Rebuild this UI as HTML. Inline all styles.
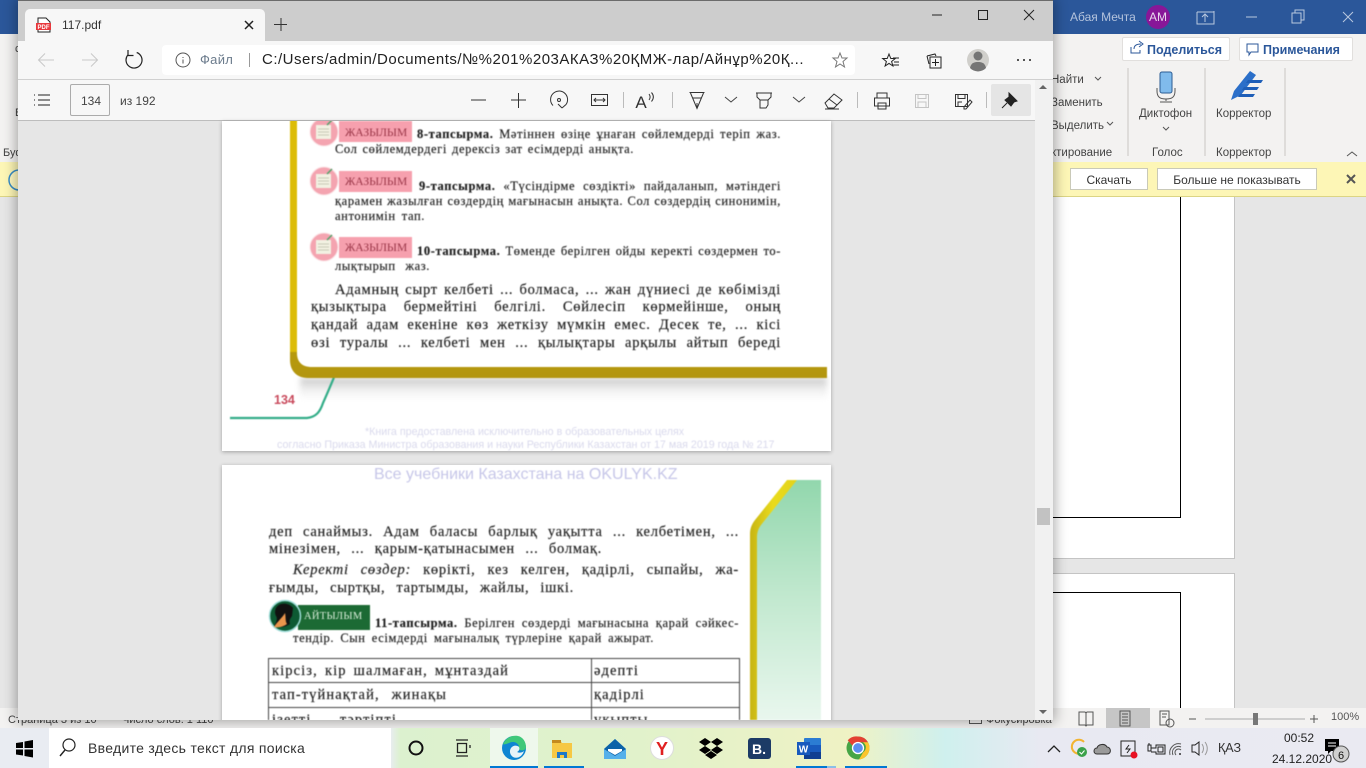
<!DOCTYPE html>
<html lang="ru"><head><meta charset="utf-8"><title>117.pdf</title>
<style>
html,body{margin:0;padding:0;width:1366px;height:768px;overflow:hidden;background:#e6e6e6}
body{position:relative;font-family:"Liberation Sans","DejaVu Sans",sans-serif;color:#333}
.a{position:absolute}
.t{position:absolute;white-space:nowrap;line-height:0}
svg{position:absolute;left:0;top:0;overflow:visible}
#win{position:absolute;left:0;top:0;width:1366px;height:768px;clip-path:inset(0 313px 48px 18px)}
.pg{position:absolute;background:#fff}
.j{position:absolute;line-height:0;text-align:justify;text-align-last:justify;font-family:"Liberation Serif","DejaVu Serif",serif;color:#1c1c1c;-webkit-text-stroke:.15px #1c1c1c}
.s{font-size:12.5px;letter-spacing:.6px}.m{font-size:14.5px;letter-spacing:.75px;color:#1a1a1a}
.c{letter-spacing:1.1px}
.btn{position:absolute;background:#fff;border:1px solid #c9c9b8;box-sizing:border-box;text-align:center;font-size:12px;color:#333}
</style></head><body>

<!-- WORD behind -->
<div class="a" style="left:0;top:0;width:1366px;height:34px;background:#2b579a"></div>
<div class="a" style="left:0;top:34px;width:1366px;height:128px;background:#f3f2f1"></div>
<div class="a" style="left:0;top:162px;width:1366px;height:35px;background:#fdf6b6;border-bottom:1px solid #dcd584;box-sizing:border-box"></div>
<div class="a" style="left:1053px;top:197px;width:181px;height:361px;background:#fff;border:solid #c4c4c4;border-width:0 1px 1px 0"></div>
<div class="a" style="left:1053px;top:573px;width:181px;height:135px;background:#fff;border:solid #c4c4c4;border-width:1px 1px 0 0"></div>
<div class="a" style="left:1053px;top:197px;width:128px;height:321px;border:solid #000;border-width:0 1px 1px 0;box-sizing:border-box"></div>
<div class="a" style="left:1053px;top:592px;width:128px;height:116px;border:solid #000;border-width:1px 1px 0 0;box-sizing:border-box"></div>
<div class="a" style="left:0;top:708px;width:1366px;height:20px;background:#f3f2f1"></div>
<div class="a" style="left:1106px;top:708px;width:44px;height:20px;background:#c6c6c6"></div>
<div class="t" style="left:8px;top:720px;font-size:11px;color:#444">Страница 3 из 10</div>
<div class="t" style="left:122px;top:720px;font-size:11px;color:#444">Число слов: 1 110</div>
<div class="t" style="left:986px;top:720px;font-size:11px;color:#444">Фокусировка</div>
<div class="a" style="left:969px;top:715px;width:13px;height:9px;border:1px solid #555;box-sizing:border-box"></div>
<div class="t" style="left:1331px;top:717px;font-size:11px;color:#555">100%</div>

<div class="t" style="left:1070px;top:17px;font-size:12px;color:#b4c3dc">Абая Мечта</div>
<div class="a" style="left:1146px;top:5px;width:24px;height:24px;border-radius:50%;background:#881798"></div>
<div class="t" style="left:1149px;top:17px;font-size:12px;color:#e8d8ec">АМ</div>
<div class="btn" style="left:1122px;top:37px;width:108px;height:24px;border-color:#e1dfdd;border-radius:2px"></div>
<div class="btn" style="left:1239px;top:37px;width:114px;height:24px;border-color:#e1dfdd;border-radius:2px"></div>
<div class="t" style="left:1147px;top:50px;font-size:12.5px;font-weight:bold;color:#2b579a">Поделиться</div>
<div class="t" style="left:1263px;top:50px;font-size:12.5px;font-weight:bold;color:#2b579a">Примечания</div>
<div class="t" style="left:1051px;top:80px;font-size:11.5px;color:#444">Найти</div>
<div class="t" style="left:1051px;top:103px;font-size:11.5px;color:#444">Заменить</div>
<div class="t" style="left:1051px;top:126px;font-size:11.5px;color:#444">Выделить</div>
<div class="t" style="left:1051px;top:153px;font-size:11.5px;color:#444">ктирование</div>
<div class="t" style="left:1139px;top:114px;font-size:11.5px;color:#444">Диктофон</div>
<div class="t" style="left:1216px;top:114px;font-size:11.5px;color:#444">Корректор</div>
<div class="t" style="left:1152px;top:153px;font-size:11.5px;color:#444">Голос</div>
<div class="t" style="left:1216px;top:153px;font-size:11.5px;color:#444">Корректор</div>
<div class="t" style="left:3px;top:153px;font-size:11px;color:#444">Буфер</div>
<div class="t" style="left:15px;top:49px;font-size:11px;color:#444">с</div>
<div class="t" style="left:15px;top:113px;font-size:11px;color:#444">В</div>
<div class="btn" style="left:1070px;top:168px;width:78px;height:22px;line-height:22px">Скачать</div>
<div class="btn" style="left:1157px;top:168px;width:160px;height:22px;line-height:22px">Больше не показывать</div>

<svg width="1366" height="768" fill="none">
 <path d="M1197 12h17v-1M1197 12v12h17v-13M1205 22v-8m-3 3l3-3 3 3" stroke="#b9c8df"/>
 <path d="M1246 17h11" stroke="#b9c8df"/>
 <path d="M1292 13h9v10h-9zM1295 13v-3h9v10h-3" stroke="#b9c8df"/>
 <path d="M1343 12l10 10m0-10l-10 10" stroke="#b9c8df"/>
 <path d="M1131 47v6h9v-3M1134 49c0-4 3-5 7-5m-2-3l4 3-4 3" stroke="#2b579a"/>
 <path d="M1247 44h11v8h-7l-2 3v-3h-2z" stroke="#2b579a"/>
 <path d="M1095 77l3 3 3-3M1107 122l3 3 3-3M1163 127l3 3 3-3M1347 156l5-4 5 4" stroke="#555"/>
 <path d="M1128 68v88M1205 68v88M1285 68v88" stroke="#c8c6c4"/>
 <rect x="1160" y="72" width="12" height="21" rx="2" fill="#80bbec" stroke="#2b5c94"/>
 <path d="M1157 88v3c0 6 3 8 9 8s9-2 9-8v-3M1166 99v2M1160 102h12" stroke="#555"/>
 <path d="M1231 100l3-9 16-20 6 4-15 20z" fill="#2b6fc9"/>
 <path d="M1248 80h15l-2 3h-15zM1244 87h15l-2 3h-15zM1240 94h15l-2 3h-15z" fill="#1f5fb8"/>
 <circle cx="19" cy="180" r="10" fill="#fff8c0" stroke="#3a8ec6" stroke-width="1.5"/>
 <path d="M1347 175l8 8m0-8l-8 8" stroke="#555" stroke-width="2"/>
 <!-- status bar icons -->
 <path d="M1079 712h6l1 1 1-1h6v13h-6l-1 1-1-1h-6zM1086 713v12M1120 711h10v15h-10zM1122 714h6M1122 717h6M1122 720h6M1122 723h6M1160 711h9v14h-9zM1162 714h5M1162 717h4" stroke="#555"/>
 <circle cx="1170" cy="723" r="4" stroke="#555"/>
 <path d="M1205 719h100" stroke="#aaa"/><rect x="1253" y="713" width="5" height="12" fill="#777"/>
 <path d="M1189 719h7M1310 719h8M1314 715v8" stroke="#555"/>
</svg>

<!-- Shadows of window -->
<div class="a" style="left:18px;top:0;width:1035px;height:720px;box-shadow:0 0 12px 2px rgba(0,0,0,.32)"></div>

<!-- EDGE window -->
<div id="win">
 <div class="a" style="left:18px;top:0;width:1035px;height:720px;background:#e6e6e6"></div>
 <div class="a" style="left:18px;top:0;width:1035px;height:41px;background:#cdcdcd;border-top:1px solid #6b6b6b;box-sizing:border-box"></div>
 <div class="a" style="left:25px;top:9px;width:240px;height:33px;background:#f7f7f7;border-radius:5px 5px 0 0"></div>
 <div class="a" style="left:18px;top:41px;width:1035px;height:39px;background:#f7f7f7;border-bottom:1px solid #d0d0d0;box-sizing:border-box"></div>
 <div class="a" style="left:162px;top:45px;width:693px;height:30px;background:#fff;border-radius:4px"></div>
 <div class="a" style="left:18px;top:80px;width:1035px;height:41px;background:#f7f7f7;border-bottom:1px solid #bdbdbd;box-sizing:border-box"></div>
 <div class="a" style="left:70px;top:84px;width:40px;height:32px;border:1px solid #ababab;border-radius:2px;box-sizing:border-box"></div>
 <div class="a" style="left:991px;top:84px;width:40px;height:32px;background:#e5e5e5;border-radius:2px"></div>
 <div class="t" style="left:62px;top:25px;font-size:12px;color:#333">117.pdf</div>
 <div class="t" style="left:200px;top:60px;font-size:13px;color:#6b7b8c;letter-spacing:.3px">Файл</div>
 <div class="t" style="left:262px;top:60px;font-size:15px;letter-spacing:.5px;color:#222">C:/Users/admin/Documents/№%201%203АКАЗ%20ҚМЖ-лар/Айнұр%20Қ...</div>
 <div class="t" style="left:81px;top:101px;font-size:12px;color:#444">134</div>
 <div class="t" style="left:120px;top:101px;font-size:12px;color:#444">из 192</div>

 <!-- scrollbar -->
 <div class="a" style="left:1035px;top:80px;width:18px;height:640px;background:#f1f1f1"></div>
 <div class="a" style="left:1037px;top:508px;width:13px;height:17px;background:#c2c2c2"></div>

 <!-- pages -->
 <div class="pg" style="left:222px;top:121px;width:609px;height:330px;box-shadow:0 1px 4px rgba(0,0,0,.3)"></div>
 <div class="pg" style="left:222px;top:465px;width:609px;height:262px;box-shadow:0 1px 4px rgba(0,0,0,.3)"></div>

 <div style="position:absolute;left:0;top:0;width:1366px;height:768px;filter:blur(.45px);clip-path:inset(121px 535px 48px 222px)">
 <svg width="1366" height="768" fill="none">
  <defs>
   <linearGradient id="sh" x1="0" y1="0" x2="0" y2="1"><stop offset="0" stop-color="#c8c8c8"/><stop offset=".5" stop-color="#eee"/><stop offset="1" stop-color="#fff"/></linearGradient>
   <linearGradient id="gr" x1="0" y1="0" x2="0" y2="1"><stop offset="0" stop-color="#92d7ad"/><stop offset=".5" stop-color="#c3e9d0"/><stop offset="1" stop-color="#e9f7ee"/></linearGradient>
   <linearGradient id="yl" x1="0" y1="0" x2="0" y2="1"><stop offset="0" stop-color="#d8b80c"/><stop offset="1" stop-color="#b3960f"/></linearGradient>
   <linearGradient id="yv" x1="0" y1="0" x2="1" y2="0"><stop offset="0" stop-color="#c7b514"/><stop offset=".5" stop-color="#eadb1c"/><stop offset="1" stop-color="#e2d21a"/></linearGradient>
   <filter id="bl"><feGaussianBlur stdDeviation="3"/></filter>
  </defs>
  <rect x="300" y="378" width="527" height="22" fill="url(#sh)" filter="url(#bl)"/>
  <path d="M338 368c-6 14-10 24-15 35-3 9-7 14-16 15H230" stroke="#33ad88" stroke-width="2.2"/>
  <path d="M290 112v248c0 11 7 18 18 18h519v-11H312c-10 0-15-5-15-14V112z" fill="url(#yl)"/>
  <path d="M290 112v240h7V112z" fill="#dcbc08"/>

  <!-- badges -->
  <circle cx="324" cy="132" r="14" fill="#f4a4b0" stroke="#fbe3e6"/>
  <rect x="316" y="125" width="15" height="14" fill="#f2f1e2"/>
  <path d="M318 129h11M318 132h11M318 135h11" stroke="#c9c9b5"/><path d="M327 125l5-5" stroke="#4fa36a" stroke-width="1.4"/>
  <rect x="339" y="121" width="73" height="21" fill="#f6a0ae"/>
  <circle cx="324" cy="181" r="14" fill="#f4a4b0" stroke="#fbe3e6"/>
  <rect x="316" y="174" width="15" height="14" fill="#f2f1e2"/>
  <path d="M318 178h11M318 181h11M318 184h11" stroke="#c9c9b5"/><path d="M327 174l5-5" stroke="#4fa36a" stroke-width="1.4"/>
  <rect x="339" y="171" width="73" height="21" fill="#f6a0ae"/>
  <circle cx="324" cy="247" r="14" fill="#f4a4b0" stroke="#fbe3e6"/>
  <rect x="316" y="240" width="15" height="14" fill="#f2f1e2"/>
  <path d="M318 244h11M318 247h11M318 250h11" stroke="#c9c9b5"/><path d="M327 240l5-5" stroke="#4fa36a" stroke-width="1.4"/>
  <rect x="339" y="237" width="73" height="21" fill="#f6a0ae"/>

  <!-- page 2 right strip -->
  <path d="M795 480h26v240h-69V535c0-6 2-10 6-16z" fill="url(#gr)"/>
  <path d="M787 480h10l-36 45c-3 4-4 8-4 13v182h-7V534c0-6 2-10 5-14z" fill="url(#yv)"/>

  <!-- Aytylym -->
  <rect x="298" y="605" width="72" height="25" fill="#1c6a34"/>
  <circle cx="285" cy="616" r="15.500" fill="#0d5a33" stroke="#9fdcd8" stroke-width="1.500"/>
  <path d="M281 604c-6 2-7 8-5 12 2 3 0 7-2 10 5 2 12 1 16-2-1-4 0-5 2-8l1-8c-3-4-8-5-12-4z" fill="#111"/>
  <path d="M274 627c3-5 8-9 11-14 1 4 0 8 2 11-4 3-9 4-13 3z" fill="#e9954c"/>
  <!-- table -->
  <path d="M268.500 720V658.500H739.500V720M268 682.500H740M268 707.500H740M591.500 658V720" stroke="#444" stroke-width="1"/>
 </svg>

 <div class="t" style="left:345px;top:133px;font-family:'Liberation Serif',serif;font-size:11.5px;color:#9a3648">ЖАЗЫЛЫМ</div>
 <div class="t" style="left:345px;top:182px;font-family:'Liberation Serif',serif;font-size:11.5px;color:#9a3648">ЖАЗЫЛЫМ</div>
 <div class="t" style="left:345px;top:248px;font-family:'Liberation Serif',serif;font-size:11.5px;color:#9a3648">ЖАЗЫЛЫМ</div>
 <div class="t" style="left:304px;top:617px;font-family:'Liberation Serif',serif;font-size:10.5px;letter-spacing:.3px;color:#dcefdc">АЙТЫЛЫМ</div>

 <div class="j s" style="left:417px;top:134px;width:364px"><b>8-тапсырма.</b> Мәтіннен өзіңе ұнаған сөйлемдерді теріп жаз.</div>
 <div class="j s" style="left:335px;top:149px;width:299px">Сол сөйлемдердегі дерексіз зат есімдерді анықта.</div>
 <div class="j s" style="left:419px;top:186px;width:362px"><b>9-тапсырма.</b> «Түсіндірме сөздікті» пайдаланып, мәтіндегі</div>
 <div class="j s" style="left:335px;top:201px;width:446px">қарамен жазылған сөздердің мағынасын анықта. Сол сөздердің синонимін,</div>
 <div class="j s" style="left:335px;top:216px;width:90px">антонимін тап.</div>
 <div class="j s" style="left:417px;top:251px;width:364px"><b>10-тапсырма.</b> Төменде берілген ойды керекті сөздермен то-</div>
 <div class="j s" style="left:335px;top:266px;width:95px">лықтырып жаз.</div>
 <div class="j m" style="left:335px;top:290px;width:446px">Адамның сырт келбеті ... болмаса, ... жан дүниесі де көбімізді</div>
 <div class="j m" style="left:311px;top:307px;width:470px">қызықтыра бермейтіні белгілі. Сөйлесіп көрмейінше, оның</div>
 <div class="j m" style="left:311px;top:325px;width:470px">қандай адам екеніне көз жеткізу мүмкін емес. Десек те, ... кісі</div>
 <div class="j m" style="left:311px;top:343px;width:470px">өзі туралы ... келбеті мен ... қылықтары арқылы айтып береді</div>

 <div class="t" style="left:274px;top:400px;font-size:12.5px;color:#c94a5c;font-weight:bold">134</div>
 <div class="t" style="left:365px;top:432px;font-size:10.7px;color:#d9d9ec">*Книга предоставлена исключительно в образовательных целях</div>
 <div class="t" style="left:277px;top:445px;font-size:10.7px;color:#d9d9ec">согласно Приказа Министра образования и науки Республики Казахстан от 17 мая 2019 года № 217</div>
 <div class="t" style="left:374px;top:475px;font-size:16px;color:#c6c6e8">Все учебники Казахстана на OKULYK.KZ</div>

 <div class="j m" style="left:269px;top:532px;width:470px">деп санаймыз. Адам баласы барлық уақытта ... келбетімен, ...</div>
 <div class="j m" style="left:269px;top:549px;width:333px">мінезімен, ... қарым-қатынасымен ... болмақ.</div>
 <div class="j m" style="left:293px;top:570px;width:446px"><i>Керекті сөздер:</i> көрікті, кез келген, қадірлі, сыпайы, жа-</div>
 <div class="j m" style="left:269px;top:588px;width:305px">ғымды, сыртқы, тартымды, жайлы, ішкі.</div>
 <div class="j s" style="left:375px;top:623px;width:364px"><b>11-тапсырма.</b> Берілген сөздерді мағынасына қарай сәйкес-</div>
 <div class="j s" style="left:293px;top:638px;width:361px">тендір. Сын есімдерді мағыналық түрлеріне қарай ажырат.</div>
 <div class="j m c" style="left:272px;top:671px;width:237px">кірсіз, кір шалмаған, мұнтаздай</div>
 <div class="j m c" style="left:594px;top:671px;width:43px">әдепті</div>
 <div class="j m c" style="left:272px;top:695px;width:175px">тап-түйнақтай, жинақы</div>
 <div class="j m c" style="left:594px;top:695px;width:52px">қадірлі</div>
 <div class="j m c" style="left:272px;top:720px;width:125px">ізетті, тәртіпті</div>
 <div class="j m c" style="left:594px;top:720px;width:58px">ұқыпты</div>
 </div>

 <!-- chrome icons -->
 <svg width="1366" height="768" fill="none">
  <!-- pdf tab icon -->
  <path d="M38 18h8l4 4v10H38z" fill="#fff" stroke="#222"/>
  <rect x="36" y="23" width="15" height="7" fill="#e8383d"/>
  <text x="43.500" y="29" font-size="6" font-weight="bold" fill="#fff" text-anchor="middle" font-family="Liberation Sans">PDF</text>
  <path d="M245 21l8 8m0-8l-8 8" stroke="#222" stroke-width="1.500"/>
  <path d="M281 18v13M274 24.500h13" stroke="#333"/>
  <!-- window ctrls -->
  <path d="M932 15h10" stroke="#222"/><path d="M978.500 10.500h9v9h-9z" stroke="#222"/><path d="M1024 10l10 10m0-10l-10 10" stroke="#222"/>
  <!-- nav -->
  <path d="M54 60H39m6-6.500L38.500 60l6.500 6.500" stroke="#c8c8c8"/>
  <path d="M82 60h15m-6-6.500l6.500 6.500-6.500 6.500" stroke="#c8c8c8"/>
  <path d="M136.700 52.500A8 8 0 1 1 127.900 54.900M128 50v5.500h5.500" stroke="#222" stroke-width="1.200"/>
  <circle cx="183" cy="60" r="7" stroke="#555"/><path d="M183 57v1M183 59.500v4" stroke="#555"/>
  <path d="M249.500 53v14" stroke="#999"/>
  <!-- star -->
  <path d="M840 53l2 5h5l-4 3.500 1.500 5.500-4.500-3-4.500 3 1.500-5.500-4-3.500h5z" stroke="#777"/>
  <path d="M889 54l1.800 4.500h4.500l-3.700 3 1.300 4.500-3.900-2.600-3.900 2.600 1.300-4.500-3.700-3h4.500z" stroke="#222"/><path d="M893 58h6M894 62h5M893 65h6" stroke="#222"/>
  <path d="M927 56l8-2 1 2M930 57h11v11h-11zM935.500 59v7M932 62.500h7M927 56l2 8" stroke="#222"/>
  <circle cx="978" cy="60" r="11" fill="#d0cfcb"/><circle cx="978" cy="56" r="4.500" fill="#757575"/><path d="M970 68c1-5 4-6 8-6s7 1 8 6a11 11 0 0 1-16 0z" fill="#757575"/>
  <circle cx="1018" cy="60" r="1" fill="#222"/><circle cx="1024" cy="60" r="1" fill="#222"/><circle cx="1030" cy="60" r="1" fill="#222"/>
  <!-- pdf toolbar -->
  <path d="M38 95h12M38 100h12M38 105h12" stroke="#222"/><path d="M34 95h1M34 100h1M34 105h1" stroke="#222"/>
  <path d="M471 100h15" stroke="#333"/><path d="M511 100h15M518.500 93v15" stroke="#333"/>
  <path d="M553 105.500A8.500 8.500 0 1 1 566 104.500L562 108M558 104l4 4" stroke="#333"/><circle cx="559" cy="100" r="1.500" stroke="#333"/>
  <path d="M591.500 94.500h16v11h-16zM594 100h11M596 98l-2 2 2 2M603 98l2 2-2 2" stroke="#333"/>
  <path d="M623.500 92v16" stroke="#bbb"/>
  <text x="641" y="108" font-size="17" fill="#333" text-anchor="middle" font-family="Liberation Sans">A</text>
  <path d="M649 94c1.500 2 1.500 4 0 6M651.500 92.500c2.500 3 2.500 6 0 9" stroke="#333"/>
  <path d="M672.500 92v16" stroke="#bbb"/>
  <path d="M689.500 92.500h15M690.500 93l6.500 15.500 6.500-15.500M692.500 98h9M697 108v-5" stroke="#333"/>
  <path d="M725 97l6 5 6-5" stroke="#444"/>
  <path d="M756 93h16M757 93v4l3 3h8l3-3v-4M760 100v8h6l2-3v-5" stroke="#333"/>
  <path d="M793 97l6 5 6-5" stroke="#444"/>
  <path d="M825 103l9-9 8 6-8 8h-6zM829 99l8 6M825 109h14" stroke="#333"/>
  <path d="M857.500 92v16" stroke="#bbb"/>
  <path d="M877 93h10v5h-10zM874.500 98h15v8h-15zM878 103h8v6h-8z" stroke="#333"/>
  <path d="M915.500 94.500h13v13h-13zM918 94.500v4h8v-4M918 107v-5h8v5" stroke="#c4c4c4"/>
  <path d="M955.500 94.500h12v12h-12zM958 94.500v4h7v-4M958 106v-4h4M964 107l6-7 2 2-6 7h-2z" stroke="#333"/>
  <path d="M986.500 92v16" stroke="#bbb"/>
  <path d="M1009 93l8 8-3 1-3 4-6-6 4-3zM1007 103l-5 5" fill="#222" stroke="#222"/>
  <path d="M1043 85l4 4h-8zM1043 714l4-4h-8z" fill="#666"/>
 </svg>
</div>

<!-- TASKBAR -->
<div class="a" style="left:0;top:728px;width:1366px;height:40px;background:linear-gradient(90deg,#e9ecf2 0,#e9ecf2 390px,#dcf1cf 400px,#e1f2cb 640px,#eff2c4 850px,#cff0ee 945px,#e8e9f2 1040px,#eaeaf2 1366px)"></div>
<div class="a" style="left:49px;top:728px;width:342px;height:40px;background:#fff"></div>
<div class="a" style="left:490px;top:728px;width:48px;height:40px;background:#eef8ec"></div>
<div class="t" style="left:88px;top:748px;font-size:14px;letter-spacing:.3px;color:#333">Введите здесь текст для поиска</div>
<div class="t" style="left:1218px;top:748px;font-size:12.5px;color:#333">ҚАЗ</div>
<div class="t" style="left:1284px;top:738px;font-size:12px;color:#222">00:52</div>
<div class="t" style="left:1272px;top:759px;font-size:12px;color:#222">24.12.2020</div>
<svg width="1366" height="768" fill="none">
 <!-- start -->
 <path d="M16 743l7-1v6h-7zM24.500 741.500l8.500-1.500v8h-8.500zM16 749.500h7v6l-7-1zM24.500 749.500H33v8l-8.500-1.500z" fill="#000"/>
 <circle cx="69" cy="745" r="6" stroke="#222" stroke-width="1.200"/><path d="M65 750l-5 6" stroke="#222" stroke-width="1.400"/>
 <circle cx="416" cy="748" r="6.500" stroke="#111" stroke-width="2"/>
 <path d="M456 740h12M456 756h12M457.500 743.500h9v9h-9zM470 741v0M470 745v3" stroke="#222" stroke-width="1.300"/>
 <!-- edge -->
 <circle cx="514" cy="748" r="12" fill="#0f85d2"/>
 <path d="M503 744c3-7 10-9 15-8 5 1 8 6 8 11 0 3-3 4-6 3-2-1-2-3-1-4-2-4-6-5-10-3-3 1-5 2-6 1z" fill="#3fc87a"/>
 <path d="M511 748c2-3 6-3 8-1 1 2 0 4-2 5 2 1 5 1 7-1-2 6-7 8-11 6-3-2-4-6-2-9z" fill="#e8f3f8"/>
 <!-- folder -->
 <path d="M552 740h8l2 3h10v15h-20z" fill="#f6c844"/><rect x="552" y="740" width="9" height="3" fill="#c48a1e"/>
 <path d="M557 758v-6h10v6h-3v-3h-4v3z" fill="#1e78c8"/>
 <rect x="490" y="766" width="48" height="2" fill="#0078d4"/><rect x="544" y="766" width="40" height="2" fill="#0078d4"/>
 <!-- mail -->
 <path d="M604 749l11-10 11 10v10h-22z" fill="#55b0ea"/><path d="M604 749l11-10 11 10-11 7z" fill="#0d63a8"/><path d="M608 749h14v2l-7 4-7-4z" fill="#fff"/>
 <!-- yandex -->
 <circle cx="662" cy="748" r="11.500" fill="#fff" stroke="#ddd"/>
 <text x="662" y="755" font-size="18" font-weight="bold" fill="#e02020" text-anchor="middle" font-family="Liberation Sans">Y</text>
 <!-- dropbox -->
 <path d="M705 738l6 4-6 4-6-4zM717 738l6 4-6 4-6-4zM705 746l6 4-6 4-6-4zM717 746l6 4-6 4-6-4zM711 751l6 4-6 4-6-4z" fill="#000"/>
 <!-- B -->
 <rect x="748" y="738" width="23" height="21" rx="3" fill="#1c3b66"/>
 <text x="759" y="754" font-size="14" font-weight="bold" fill="#fff" text-anchor="middle" font-family="Liberation Sans">B.</text>
 <!-- word -->
 <rect x="804" y="738" width="17" height="21" rx="1" fill="#2b7cd3"/><rect x="804" y="745" width="17" height="7" fill="#185abd"/><rect x="804" y="752" width="17" height="7" fill="#103f91"/>
 <rect x="797" y="742" width="13" height="13" fill="#185abd"/>
 <text x="803.500" y="752.500" font-size="10" font-weight="bold" fill="#fff" text-anchor="middle" font-family="Liberation Sans">W</text>
 <rect x="796" y="766" width="40" height="2" fill="#0078d4"/><rect x="827" y="766" width="9" height="2" fill="#8bbfe8"/><rect x="845" y="766" width="42" height="2" fill="#0078d4"/>
 <!-- chrome -->
 <circle cx="858" cy="748" r="11.500" fill="#46a546"/><path d="M858 736.500a11.500 11.500 0 0 1 10 5.750H858a6 6 0 0 0-5.500 3.500l-4.800-5.500a11.500 11.500 0 0 1 10.300-3.750z" fill="#e34133"/>
 <path d="M868 742.250a11.500 11.500 0 0 1-9 17.200l4-7a6 6 0 0 0 0-10.200z" fill="#fbc52d"/>
 <circle cx="858" cy="748" r="5.500" fill="#5a8ff0" stroke="#fff" stroke-width="1.300"/>
 <!-- tray -->
 <path d="M1048 752l6-6 6 6" stroke="#222" stroke-width="1.300"/>
 <path d="M1084 742a7 7 0 1 0-2 11" stroke="#f2b431" stroke-width="2"/><circle cx="1082" cy="752" r="5" fill="#3aa24a"/><path d="M1079.500 752l2 2 3-3.500" stroke="#fff"/>
 <path d="M1097 754c-4 0-4-6 0-6 1-4 8-5 10-1 4 0 5 7 0 7z" fill="#9a9a9a" stroke="#333"/>
 <path d="M1121 741h14v15h-14zM1129 745l-3 4h4l-3 4" stroke="#222"/><circle cx="1134" cy="755" r="3.500" fill="#e81123"/>
 <path d="M1148 745h3v6h-3zM1149 743v2M1151 748h5v-3h9v9h-9v-2h-5M1158 747h5v5h-5z" stroke="#222"/>
 <path d="M1170 755a9 9 0 0 1 11-11M1173 755a6 6 0 0 1 8-8M1176 755a3 3 0 0 1 5-5" stroke="#555"/><circle cx="1180" cy="754" r="1" fill="#333"/>
 <path d="M1192 745h3l4-3v13l-4-3h-3z" stroke="#222"/><path d="M1202 744c2 3 2 6 0 9M1205 742c3 4 3 9 0 13" stroke="#999"/>
 <path d="M1325 739h14v12h-8l-3 3v-3h-3z" fill="#000"/><path d="M1328 743h8M1328 746h8" stroke="#fff"/>
 <circle cx="1341" cy="754" r="8" fill="#d0d0d0" stroke="#555"/>
 <text x="1341" y="759" font-size="11" fill="#111" text-anchor="middle" font-family="Liberation Sans">6</text>
</svg>
</body></html>
